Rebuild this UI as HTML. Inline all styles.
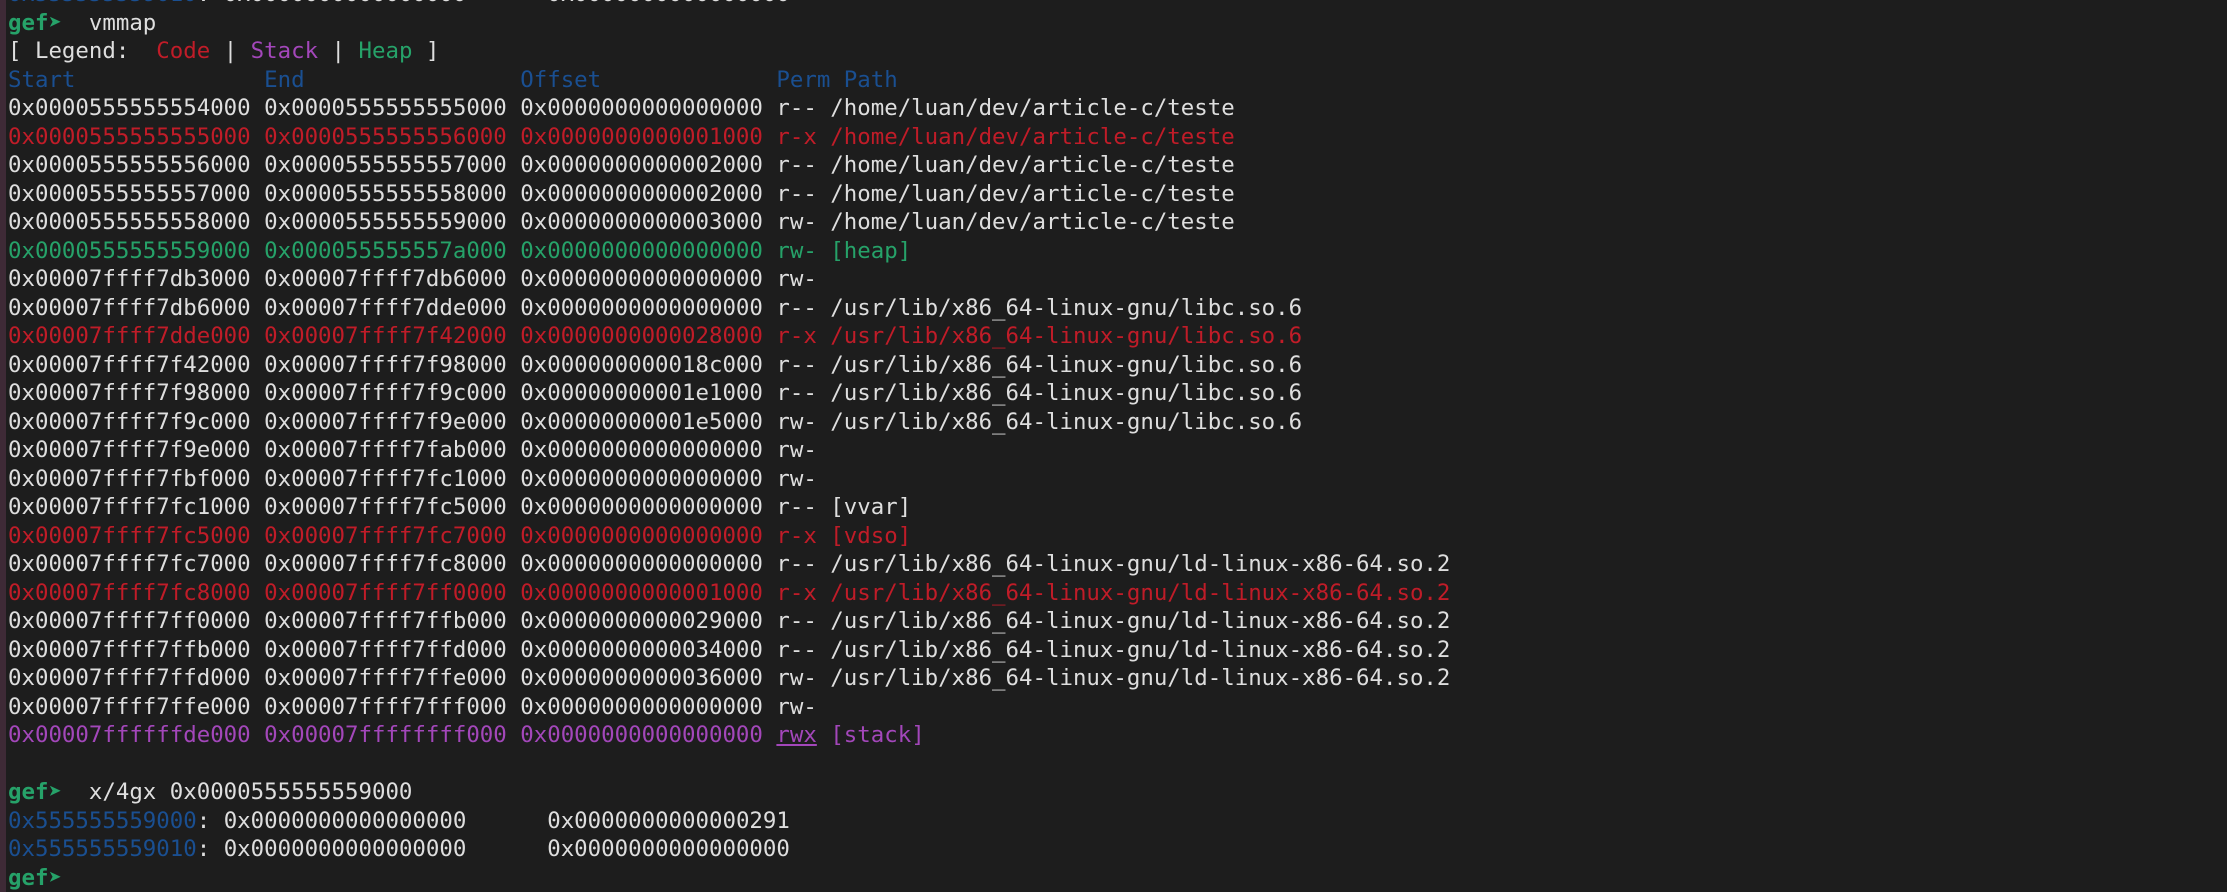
<!DOCTYPE html>
<html><head><meta charset="utf-8"><style>
html,body{margin:0;padding:0;background:#1d1d1d;width:2227px;height:892px;overflow:hidden}
.bar{position:absolute;left:0;top:0;width:6px;height:892px;background:#3e2a36}
pre{position:absolute;left:8px;top:-20px;margin:0;font-family:"DejaVu Sans Mono","Liberation Mono",monospace;font-size:22.4px;line-height:28.5px;color:#dedede;white-space:pre}
.r{color:#c01c28}.p{color:#a347ba}.g{color:#26a269}.b{color:#1a4f91}
.gef{color:#26a269;font-weight:bold}
u{text-decoration:underline}
</style></head><body><div class="bar"></div><pre><span class="b">0x555555559010</span>: 0x0000000000000000      0x0000000000000000
<span class="gef">gef➤</span>  vmmap
[ Legend:  <span class="r">Code</span> | <span class="p">Stack</span> | <span class="g">Heap</span> ]
<span class="b">Start              End                Offset             Perm Path</span>
0x0000555555554000 0x0000555555555000 0x0000000000000000 r-- /home/luan/dev/article-c/teste
<span class="r">0x0000555555555000 0x0000555555556000 0x0000000000001000 r-x /home/luan/dev/article-c/teste</span>
0x0000555555556000 0x0000555555557000 0x0000000000002000 r-- /home/luan/dev/article-c/teste
0x0000555555557000 0x0000555555558000 0x0000000000002000 r-- /home/luan/dev/article-c/teste
0x0000555555558000 0x0000555555559000 0x0000000000003000 rw- /home/luan/dev/article-c/teste
<span class="g">0x0000555555559000 0x000055555557a000 0x0000000000000000 rw- [heap]</span>
0x00007ffff7db3000 0x00007ffff7db6000 0x0000000000000000 rw-
0x00007ffff7db6000 0x00007ffff7dde000 0x0000000000000000 r-- /usr/lib/x86_64-linux-gnu/libc.so.6
<span class="r">0x00007ffff7dde000 0x00007ffff7f42000 0x0000000000028000 r-x /usr/lib/x86_64-linux-gnu/libc.so.6</span>
0x00007ffff7f42000 0x00007ffff7f98000 0x000000000018c000 r-- /usr/lib/x86_64-linux-gnu/libc.so.6
0x00007ffff7f98000 0x00007ffff7f9c000 0x00000000001e1000 r-- /usr/lib/x86_64-linux-gnu/libc.so.6
0x00007ffff7f9c000 0x00007ffff7f9e000 0x00000000001e5000 rw- /usr/lib/x86_64-linux-gnu/libc.so.6
0x00007ffff7f9e000 0x00007ffff7fab000 0x0000000000000000 rw-
0x00007ffff7fbf000 0x00007ffff7fc1000 0x0000000000000000 rw-
0x00007ffff7fc1000 0x00007ffff7fc5000 0x0000000000000000 r-- [vvar]
<span class="r">0x00007ffff7fc5000 0x00007ffff7fc7000 0x0000000000000000 r-x [vdso]</span>
0x00007ffff7fc7000 0x00007ffff7fc8000 0x0000000000000000 r-- /usr/lib/x86_64-linux-gnu/ld-linux-x86-64.so.2
<span class="r">0x00007ffff7fc8000 0x00007ffff7ff0000 0x0000000000001000 r-x /usr/lib/x86_64-linux-gnu/ld-linux-x86-64.so.2</span>
0x00007ffff7ff0000 0x00007ffff7ffb000 0x0000000000029000 r-- /usr/lib/x86_64-linux-gnu/ld-linux-x86-64.so.2
0x00007ffff7ffb000 0x00007ffff7ffd000 0x0000000000034000 r-- /usr/lib/x86_64-linux-gnu/ld-linux-x86-64.so.2
0x00007ffff7ffd000 0x00007ffff7ffe000 0x0000000000036000 rw- /usr/lib/x86_64-linux-gnu/ld-linux-x86-64.so.2
0x00007ffff7ffe000 0x00007ffff7fff000 0x0000000000000000 rw-
<span class="p">0x00007ffffffde000 0x00007ffffffff000 0x0000000000000000 <u>rwx</u> [stack]</span>

<span class="gef">gef➤</span>  x/4gx 0x0000555555559000
<span class="b">0x555555559000</span>: 0x0000000000000000      0x0000000000000291
<span class="b">0x555555559010</span>: 0x0000000000000000      0x0000000000000000
<span class="gef">gef➤</span> </pre></body></html>
